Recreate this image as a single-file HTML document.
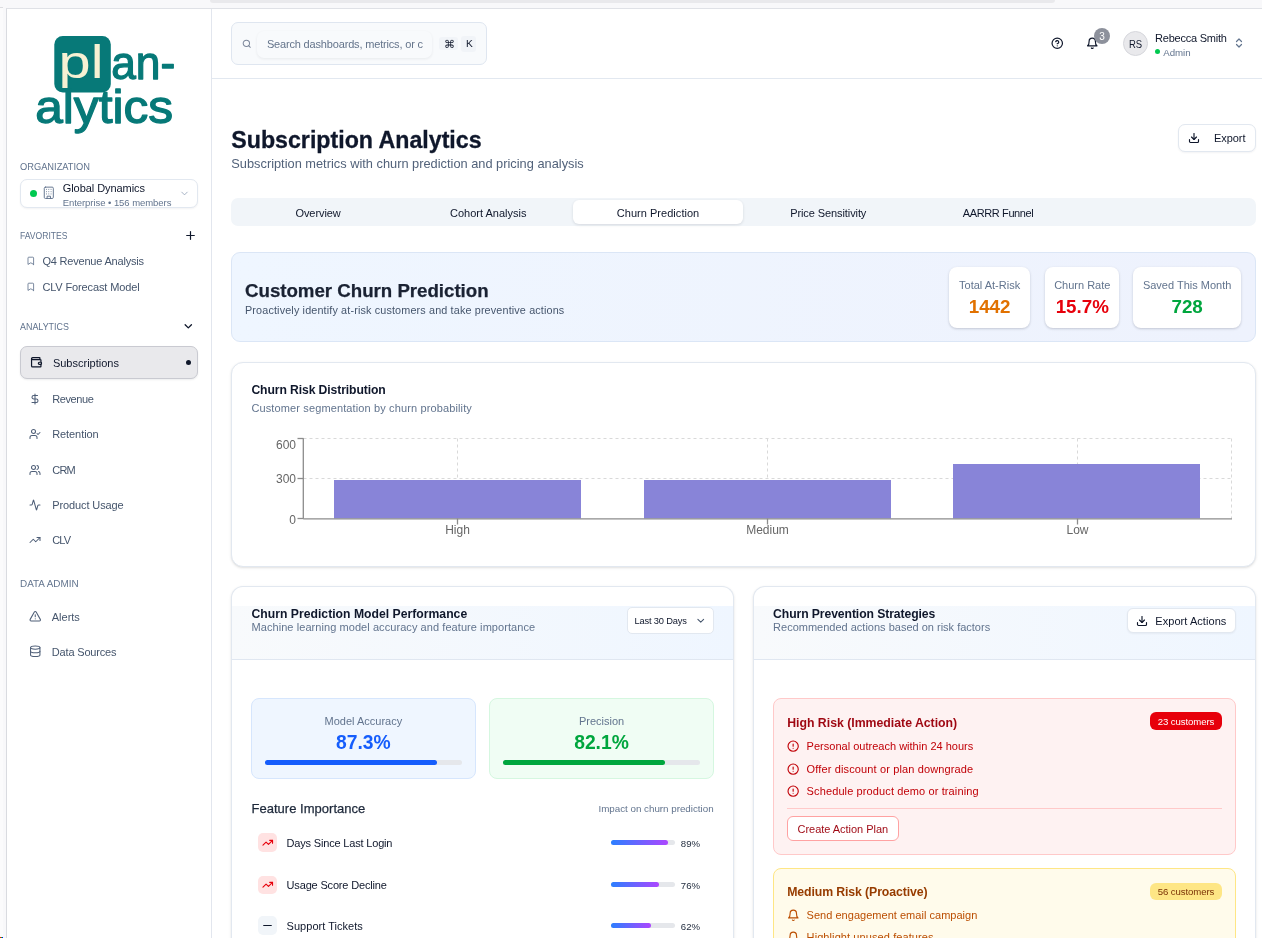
<!DOCTYPE html>
<html lang="en">
<head>
<meta charset="utf-8">
<title>Subscription Analytics - Plan-alytics</title>
<style>
html,body{margin:0;padding:0}
body{width:1262px;height:938px;overflow:hidden;position:relative;background:#f8f8fa;font-family:"Liberation Sans", sans-serif;}
#app div,#app span,#app svg{position:absolute;box-sizing:border-box}
#app span{white-space:nowrap;display:block}
#app{position:absolute;left:0;top:0;width:1262px;height:938px;will-change:transform}
#app svg{overflow:visible}
#app svg text{font-family:"Liberation Sans", sans-serif}
</style>
</head>
<body>
<div id="app">
<div style="left:0px;top:0px;width:1262px;height:938px;background:#f8f8fa"></div>
<div style="left:210px;top:0px;width:845px;height:3px;background:#e9e9ec;border-radius:0 0 6px 6px"></div>
<div style="left:0px;top:7px;width:3px;height:1px;background:#dcdce0"></div>
<div style="left:0px;top:8px;width:3px;height:930px;background:#fbfbfc"></div>
<div style="left:0px;top:937px;width:1px;height:1px;background:#ff0000"></div>
<div style="left:1px;top:937px;width:1px;height:1px;background:#00d000"></div>
<div style="left:2px;top:937px;width:1px;height:1px;background:#0000ff"></div>
<div style="left:6px;top:8px;width:1256px;height:930px;background:#fff;border-top:1px solid #dfe1e6;border-left:1px solid #d9dbe0"></div>
<div style="left:212px;top:79px;width:1050px;height:859px;background:#ffffff"></div>
<div style="left:211px;top:9px;width:1px;height:929px;background:#e2e6ee"></div>
<div style="left:212px;top:78px;width:1050px;height:1px;background:#e2e8f0"></div>
<svg style="left:30px;top:30px" width="160" height="112" viewBox="30 30 160 112">
<rect x="54.3" y="35.9" width="56.5" height="56.7" rx="8.5" fill="#077978"/>
<text x="58.6" y="78" font-size="47" fill="#f6f1d3" textLength="45" lengthAdjust="spacingAndGlyphs">pl</text>
<g fill="#077978" stroke="#077978" stroke-width="1.3" stroke-linejoin="round">
<text x="111.2" y="78.5" font-size="47" textLength="64" lengthAdjust="spacingAndGlyphs">an-</text>
<text x="35.2" y="123" font-size="47" textLength="138" lengthAdjust="spacingAndGlyphs">alytics</text>
</g>
</svg>
<span style="left:20.00px;top:160.50px;font-size:10.1px;line-height:14px;color:#62748e;transform:scaleX(0.9201);transform-origin:left center;text-rendering:geometricPrecision;">ORGANIZATION</span>
<div style="left:20px;top:179px;width:178px;height:29px;background:#fff;border:1px solid #e2e8f0;border-radius:7px;box-shadow:0 1px 2px rgba(15,23,42,.05)"></div>
<div style="left:29.7px;top:189.5px;width:7.400000000000002px;height:7.400000000000006px;background:#00c950;border-radius:50%"></div>
<svg style="left:42.20px;top:186.40px" width="13.6" height="13.6" viewBox="0 0 24 24" fill="none" stroke="#62748e" stroke-width="1.7" stroke-linecap="round" stroke-linejoin="round"><rect width="16" height="20" x="4" y="2" rx="2" ry="2"/><path d="M9 22v-4h6v4"/><path d="M8 6h.01"/><path d="M16 6h.01"/><path d="M12 6h.01"/><path d="M12 10h.01"/><path d="M12 14h.01"/><path d="M16 10h.01"/><path d="M16 14h.01"/><path d="M8 10h.01"/><path d="M8 14h.01"/></svg>
<span style="left:62.70px;top:181.00px;font-size:11px;line-height:15px;color:#0f172b;letter-spacing:-0.056px;">Global Dynamics</span>
<span style="left:62.70px;top:196.20px;font-size:9.5px;line-height:13px;color:#62748e;letter-spacing:-0.054px;">Enterprise • 156 members</span>
<svg style="left:179.20px;top:187.80px" width="11" height="11" viewBox="0 0 24 24" fill="none" stroke="#94a3b8" stroke-width="1.8" stroke-linecap="round" stroke-linejoin="round"><path d="m6 9 6 6 6-6"/></svg>
<span style="left:20.00px;top:229.60px;font-size:10.1px;line-height:14px;color:#62748e;transform:scaleX(0.8496);transform-origin:left center;text-rendering:geometricPrecision;">FAVORITES</span>
<svg style="left:184.00px;top:228.70px" width="13" height="13" viewBox="0 0 24 24" fill="none" stroke="#0f172b" stroke-width="2.2" stroke-linecap="round" stroke-linejoin="round"><path d="M5 12h14"/><path d="M12 5v14"/></svg>
<svg style="left:25.90px;top:256.30px" width="9.6" height="9.6" viewBox="0 0 24 24" fill="none" stroke="#62748e" stroke-width="2.1" stroke-linecap="round" stroke-linejoin="round"><path d="m19 21-7-4-7 4V5a2 2 0 0 1 2-2h10a2 2 0 0 1 2 2v16z"/></svg>
<span style="left:42.40px;top:253.50px;font-size:11px;line-height:15px;color:#45556c;letter-spacing:-0.193px;">Q4 Revenue Analysis</span>
<svg style="left:25.90px;top:282.30px" width="9.6" height="9.6" viewBox="0 0 24 24" fill="none" stroke="#62748e" stroke-width="2.1" stroke-linecap="round" stroke-linejoin="round"><path d="m19 21-7-4-7 4V5a2 2 0 0 1 2-2h10a2 2 0 0 1 2 2v16z"/></svg>
<span style="left:42.40px;top:279.50px;font-size:11px;line-height:15px;color:#45556c;letter-spacing:-0.131px;">CLV Forecast Model</span>
<span style="left:20.00px;top:321.40px;font-size:10.1px;line-height:14px;color:#62748e;transform:scaleX(0.8836);transform-origin:left center;text-rendering:geometricPrecision;">ANALYTICS</span>
<svg style="left:182.20px;top:320.00px" width="12.6" height="12.6" viewBox="0 0 24 24" fill="none" stroke="#0f172b" stroke-width="2.5" stroke-linecap="round" stroke-linejoin="round"><path d="m6 9 6 6 6-6"/></svg>
<div style="left:20px;top:346px;width:178px;height:33px;background:#e9e9ec;border:1px solid #c9cad1;border-radius:7px;box-shadow:0 1px 2px rgba(15,23,42,.08)"></div>
<svg style="left:30.15px;top:356.05px" width="12.5" height="12.5" viewBox="0 0 24 24" fill="none" stroke="#0f172b" stroke-width="2.3" stroke-linecap="round" stroke-linejoin="round"><path d="M19 7V4a1 1 0 0 0-1-1H5a2 2 0 0 0 0 4h15a1 1 0 0 1 1 1v4h-3a2 2 0 0 0 0 4h3a1 1 0 0 0 1-1v-2a1 1 0 0 0-1-1"/><path d="M3 5v14a2 2 0 0 0 2 2h15a1 1 0 0 0 1-1v-4"/></svg>
<span style="left:52.90px;top:356.20px;font-size:11px;line-height:15px;color:#0f172b;">Subscriptions</span>
<div style="left:185.6px;top:360.3px;width:5.0px;height:5.0px;background:#0f172a;border-radius:50%"></div>
<svg style="left:28.80px;top:392.70px" width="12" height="12" viewBox="0 0 24 24" fill="none" stroke="#4e5e77" stroke-width="2.1" stroke-linecap="round" stroke-linejoin="round"><line x1="12" x2="12" y1="2" y2="22"/><path d="M17 5H9.5a3.5 3.5 0 0 0 0 7h5a3.5 3.5 0 0 1 0 7H6"/></svg>
<span style="left:52.20px;top:392.10px;font-size:11px;line-height:15px;color:#45556c;letter-spacing:-0.392px;">Revenue</span>
<svg style="left:28.80px;top:427.80px" width="12" height="12" viewBox="0 0 24 24" fill="none" stroke="#4e5e77" stroke-width="2.1" stroke-linecap="round" stroke-linejoin="round"><path d="M16 21v-2a4 4 0 0 0-4-4H6a4 4 0 0 0-4 4v2"/><circle cx="9" cy="7" r="4"/><polyline points="16 11 18 13 22 9"/></svg>
<span style="left:52.20px;top:427.20px;font-size:11px;line-height:15px;color:#45556c;letter-spacing:-0.077px;">Retention</span>
<svg style="left:28.80px;top:464.10px" width="12" height="12" viewBox="0 0 24 24" fill="none" stroke="#4e5e77" stroke-width="2.1" stroke-linecap="round" stroke-linejoin="round"><path d="M16 21v-2a4 4 0 0 0-4-4H6a4 4 0 0 0-4 4v2"/><circle cx="9" cy="7" r="4"/><path d="M22 21v-2a4 4 0 0 0-3-3.87"/><path d="M16 3.13a4 4 0 0 1 0 7.75"/></svg>
<span style="left:52.20px;top:462.80px;font-size:11px;line-height:15px;color:#45556c;letter-spacing:-0.754px;">CRM</span>
<svg style="left:28.80px;top:498.90px" width="12" height="12" viewBox="0 0 24 24" fill="none" stroke="#4e5e77" stroke-width="2.1" stroke-linecap="round" stroke-linejoin="round"><path d="M22 12h-2.48a2 2 0 0 0-1.93 1.46l-2.35 8.36a.25.25 0 0 1-.48 0L9.24 2.18a.25.25 0 0 0-.48 0l-2.35 8.36A2 2 0 0 1 4.49 12H2"/></svg>
<span style="left:52.20px;top:498.30px;font-size:11px;line-height:15px;color:#45556c;letter-spacing:-0.105px;">Product Usage</span>
<svg style="left:28.80px;top:533.70px" width="12" height="12" viewBox="0 0 24 24" fill="none" stroke="#4e5e77" stroke-width="2.1" stroke-linecap="round" stroke-linejoin="round"><polyline points="22 7 13.5 15.5 8.5 10.5 2 17"/><polyline points="16 7 22 7 22 13"/></svg>
<span style="left:52.20px;top:532.90px;font-size:11px;line-height:15px;color:#45556c;letter-spacing:-0.850px;">CLV</span>
<span style="left:20.00px;top:578.40px;font-size:10.1px;line-height:14px;color:#62748e;transform:scaleX(0.9826);transform-origin:left center;text-rendering:geometricPrecision;">DATA ADMIN</span>
<svg style="left:28.95px;top:610.35px" width="12.5" height="12.5" viewBox="0 0 24 24" fill="none" stroke="#4e5e77" stroke-width="2.0" stroke-linecap="round" stroke-linejoin="round"><path d="m21.73 18-8-14a2 2 0 0 0-3.48 0l-8 14A2 2 0 0 0 4 21h16a2 2 0 0 0 1.73-3"/><path d="M12 9v4"/><path d="M12 17h.01"/></svg>
<span style="left:51.80px;top:610.00px;font-size:11px;line-height:15px;color:#45556c;letter-spacing:-0.021px;">Alerts</span>
<svg style="left:28.95px;top:645.35px" width="12.5" height="12.5" viewBox="0 0 24 24" fill="none" stroke="#4e5e77" stroke-width="2.0" stroke-linecap="round" stroke-linejoin="round"><ellipse cx="12" cy="5" rx="9" ry="3"/><path d="M3 5V19A9 3 0 0 0 21 19V5"/><path d="M3 12A9 3 0 0 0 21 12"/></svg>
<span style="left:51.80px;top:644.60px;font-size:11px;line-height:15px;color:#45556c;letter-spacing:-0.171px;">Data Sources</span>
<div style="left:231px;top:22px;width:256px;height:43px;background:#f8fafc;border:1px solid #dfe6f0;border-radius:7px"></div>
<svg style="left:241.85px;top:38.85px" width="9.5" height="9.5" viewBox="0 0 24 24" fill="none" stroke="#7c879b" stroke-width="2.6" stroke-linecap="round" stroke-linejoin="round"><circle cx="11" cy="11" r="8"/><path d="m21 21-4.3-4.3"/></svg>
<div style="left:256.5px;top:31px;width:175.8px;height:27px;background:#f8fafc;border-radius:7px;box-shadow:0 1px 3px rgba(15,23,42,.07)"></div>
<span style="left:266.90px;top:37.00px;font-size:11px;line-height:15px;color:#64748b;letter-spacing:-0.169px;">Search dashboards, metrics, or c</span>
<div style="left:439px;top:37.2px;width:19px;height:13.0px;background:#f1f4f8;border-radius:3px"></div>
<span style="left:443.55px;top:37.00px;font-size:10.5px;line-height:15px;color:#0f172b;font-family:"DejaVu Sans", sans-serif;text-rendering:geometricPrecision;">⌘</span>
<div style="left:461px;top:36.4px;width:15.199999999999989px;height:15.200000000000003px;background:#f1f4f8;border-radius:3px"></div>
<span style="left:465.90px;top:38.40px;font-size:10.2px;line-height:14px;color:#0f172b;text-rendering:geometricPrecision;">K</span>
<svg style="left:1051.05px;top:37.35px" width="12.5" height="12.5" viewBox="0 0 24 24" fill="none" stroke="#0f172b" stroke-width="2.3" stroke-linecap="round" stroke-linejoin="round"><circle cx="12" cy="12" r="10"/><path d="M9.09 9a3 3 0 0 1 5.83 1c0 2-3 3-3 3"/><path d="M12 17h.01"/></svg>
<svg style="left:1086.15px;top:37.15px" width="12.5" height="12.5" viewBox="0 0 24 24" fill="none" stroke="#0f172b" stroke-width="2.3" stroke-linecap="round" stroke-linejoin="round"><path d="M6 8a6 6 0 0 1 12 0c0 7 3 9 3 9H3s3-2 3-9"/><path d="M10.3 21a1.94 1.94 0 0 0 3.4 0"/></svg>
<div style="left:1094px;top:28px;width:16px;height:16px;background:#8d919c;border-radius:50%"></div>
<span style="left:1099.22px;top:30.40px;font-size:10px;line-height:14px;color:#fff;">3</span>
<div style="left:1123px;top:31px;width:25px;height:25px;background:#e9e9ec;border:1px solid #d6d7dc;border-radius:50%"></div>
<span style="left:1129.00px;top:36.00px;font-size:11.2px;line-height:16px;color:#0f172b;transform:scaleX(0.8490);transform-origin:left center;">RS</span>
<span style="left:1155.10px;top:30.80px;font-size:11px;line-height:15px;color:#0f172b;letter-spacing:-0.230px;">Rebecca Smith</span>
<div style="left:1155px;top:49px;width:5px;height:5px;background:#00c950;border-radius:50%"></div>
<span style="left:1163.20px;top:46.10px;font-size:9.7px;line-height:14px;color:#62748e;letter-spacing:-0.014px;">Admin</span>
<svg style="left:1233.40px;top:37.30px" width="12" height="12" viewBox="0 0 24 24" fill="none" stroke="#62748e" stroke-width="2.4" stroke-linecap="round" stroke-linejoin="round"><path d="m7 15 5 5 5-5"/><path d="m7 9 5-5 5 5"/></svg>
<span style="left:231.30px;top:124.50px;font-size:23.2px;line-height:30px;color:#0f172b;font-weight:700;letter-spacing:-0.004px;-webkit-text-stroke:0.3px #0f172b;">Subscription Analytics</span>
<span style="left:231.30px;top:155.40px;font-size:12.8px;line-height:18px;color:#52627a;letter-spacing:0.005px;">Subscription metrics with churn prediction and pricing analysis</span>
<div style="left:1177.5px;top:124px;width:78.0px;height:28.400000000000006px;background:#fff;border:1px solid #e2e8f0;border-radius:7px;box-shadow:0 1px 2px rgba(15,23,42,.05)"></div>
<svg style="left:1188.40px;top:132.30px" width="12" height="12" viewBox="0 0 24 24" fill="none" stroke="#0f172b" stroke-width="2.3" stroke-linecap="round" stroke-linejoin="round"><path d="M21 15v4a2 2 0 0 1-2 2H5a2 2 0 0 1-2-2v-4"/><polyline points="7 10 12 15 17 10"/><line x1="12" x2="12" y1="15" y2="3"/></svg>
<span style="left:1213.90px;top:131.30px;font-size:11px;line-height:15px;color:#0f172b;letter-spacing:-0.033px;">Export</span>
<div style="left:231px;top:198px;width:1024.5px;height:28px;background:#f1f5f9;border-radius:7px"></div>
<div style="left:573px;top:200px;width:170px;height:24px;background:#fff;border-radius:6px;box-shadow:0 1px 3px rgba(15,23,42,.12)"></div>
<span style="left:295.42px;top:205.90px;font-size:11px;line-height:15px;color:#0f172b;letter-spacing:-0.068px;">Overview</span>
<span style="left:449.95px;top:205.90px;font-size:11px;line-height:15px;color:#0f172b;letter-spacing:0.004px;">Cohort Analysis</span>
<span style="left:616.77px;top:205.90px;font-size:11px;line-height:15px;color:#0f172b;letter-spacing:0.035px;">Churn Prediction</span>
<span style="left:790.20px;top:205.90px;font-size:11px;line-height:15px;color:#0f172b;letter-spacing:-0.091px;">Price Sensitivity</span>
<span style="left:962.81px;top:205.90px;font-size:11px;line-height:15px;color:#0f172b;letter-spacing:-0.384px;">AARRR Funnel</span>
<div style="left:231px;top:252px;width:1024.5px;height:90px;background:linear-gradient(90deg,#eff6ff 0%,#eef2fd 100%);border:1px solid #dbe6f6;border-radius:9px"></div>
<span style="left:245.00px;top:278.20px;font-size:18.7px;line-height:26px;color:#1a2233;font-weight:700;letter-spacing:-0.016px;-webkit-text-stroke:0.25px #1a2233;">Customer Churn Prediction</span>
<span style="left:245.00px;top:302.90px;font-size:10.8px;line-height:15px;color:#45556c;letter-spacing:0.148px;">Proactively identify at-risk customers and take preventive actions</span>
<div style="left:949px;top:266.8px;width:81.20000000000005px;height:61.599999999999966px;background:#fff;border-radius:8px;box-shadow:0 1px 3px rgba(15,23,42,.14),0 1px 2px rgba(15,23,42,.06)"></div>
<span style="left:959.03px;top:277.70px;font-size:11px;line-height:15px;color:#62748e;">Total At-Risk</span>
<span style="left:968.71px;top:295.20px;font-size:18.8px;line-height:24px;color:#e17100;font-weight:700;">1442</span>
<div style="left:1045.2px;top:266.8px;width:74.20000000000005px;height:61.599999999999966px;background:#fff;border-radius:8px;box-shadow:0 1px 3px rgba(15,23,42,.14),0 1px 2px rgba(15,23,42,.06)"></div>
<span style="left:1054.17px;top:277.70px;font-size:11px;line-height:15px;color:#62748e;">Churn Rate</span>
<span style="left:1055.67px;top:295.20px;font-size:18.8px;line-height:24px;color:#e7000b;font-weight:700;">15.7%</span>
<div style="left:1132.8px;top:266.8px;width:108.70000000000005px;height:61.599999999999966px;background:#fff;border-radius:8px;box-shadow:0 1px 3px rgba(15,23,42,.14),0 1px 2px rgba(15,23,42,.06)"></div>
<span style="left:1142.92px;top:277.70px;font-size:11px;line-height:15px;color:#62748e;">Saved This Month</span>
<span style="left:1171.48px;top:295.20px;font-size:18.8px;line-height:24px;color:#00a63e;font-weight:700;">728</span>
<div style="left:231px;top:362px;width:1024.5px;height:205px;background:#fff;border:1px solid #e2e8f0;border-radius:12px;box-shadow:0 1px 3px rgba(0,0,0,.1),0 1px 2px -1px rgba(0,0,0,.1)"></div>
<span style="left:251.40px;top:382.00px;font-size:12.2px;line-height:17px;color:#0f172b;font-weight:700;letter-spacing:-0.108px;">Churn Risk Distribution</span>
<span style="left:251.40px;top:400.70px;font-size:11px;line-height:15px;color:#62748e;letter-spacing:0.128px;">Customer segmentation by churn probability</span>
<svg style="left:260px;top:430px" width="990" height="115" viewBox="260 430 990 115">
<g stroke="#d9d9d9" stroke-dasharray="3 3" fill="none" stroke-width="1">
<line x1="303.5" y1="438.5" x2="1232" y2="438.5"/><line x1="303.5" y1="478.5" x2="1232" y2="478.5"/>
<line x1="457.5" y1="438.5" x2="457.5" y2="518.5"/><line x1="767.5" y1="438.5" x2="767.5" y2="518.5"/><line x1="1077.5" y1="438.5" x2="1077.5" y2="518.5"/>
<line x1="1231.5" y1="438.5" x2="1231.5" y2="518.5"/>
</g>
<g fill="#8884d8">
<rect x="334" y="480" width="247" height="38.5"/><rect x="644" y="480" width="247" height="38.5"/><rect x="953" y="464" width="247" height="54.5"/>
</g>
<g stroke="#8c8c8c" stroke-width="1.3" fill="none">
<line x1="303.3" y1="438.3" x2="303.3" y2="518.8"/><line x1="303.3" y1="518.8" x2="1232" y2="518.8"/>
<line x1="297.5" y1="438.5" x2="303.5" y2="438.5"/><line x1="297.5" y1="478.5" x2="303.5" y2="478.5"/><line x1="297.5" y1="518.5" x2="303.5" y2="518.5"/>
<line x1="457.5" y1="518.5" x2="457.5" y2="524.5"/><line x1="767.5" y1="518.5" x2="767.5" y2="524.5"/><line x1="1077.5" y1="518.5" x2="1077.5" y2="524.5"/>
</g>
<g fill="#666" font-size="12">
<text x="296" y="449" text-anchor="end">600</text><text x="296" y="483.2" text-anchor="end">300</text><text x="296" y="524" text-anchor="end">0</text>
<text x="457.5" y="534" text-anchor="middle">High</text><text x="767.5" y="534" text-anchor="middle">Medium</text><text x="1077.5" y="534" text-anchor="middle">Low</text>
</g>
</svg>
<div style="left:231px;top:586px;width:502.5px;height:359px;background:#fff;border:1px solid #e2e8f0;border-bottom:none;border-radius:12px 12px 0 0;box-shadow:0 1px 3px rgba(0,0,0,.1),0 1px 2px -1px rgba(0,0,0,.1)"></div>
<div style="left:232px;top:606px;width:500.5px;height:53.5px;background:linear-gradient(90deg,#f8fafc,#eff6ff);border-bottom:1px solid #e0e7f1"></div>
<span style="left:251.50px;top:605.60px;font-size:12.2px;line-height:17px;color:#0f172b;font-weight:700;letter-spacing:0.010px;">Churn Prediction Model Performance</span>
<span style="left:251.50px;top:620.20px;font-size:11px;line-height:15px;color:#62748e;letter-spacing:0.068px;">Machine learning model accuracy and feature importance</span>
<div style="left:627.3px;top:607.3px;width:86.40000000000009px;height:26.300000000000068px;background:#fff;border:1px solid #e2e8f0;border-radius:5px"></div>
<span style="left:634.50px;top:615.10px;font-size:9.3px;line-height:13px;color:#0f172b;letter-spacing:-0.172px;">Last 30 Days</span>
<svg style="left:695.05px;top:615.45px" width="11.5" height="11.5" viewBox="0 0 24 24" fill="none" stroke="#45556c" stroke-width="2.2" stroke-linecap="round" stroke-linejoin="round"><path d="m6 9 6 6 6-6"/></svg>
<div style="left:251px;top:698px;width:224.7px;height:80.79999999999995px;background:#eff6ff;border:1px solid #d6e6fd;border-radius:8px"></div>
<span style="left:324.57px;top:713.50px;font-size:11px;line-height:15px;color:#62748e;">Model Accuracy</span>
<span style="left:336.06px;top:731.20px;font-size:19.3px;line-height:24px;color:#155dfc;font-weight:700;">87.3%</span>
<div style="left:265.2px;top:760px;width:196.8px;height:5.2000000000000455px;background:#e5e7eb;border-radius:3px"></div>
<div style="left:265.2px;top:760px;width:171.8px;height:5.2000000000000455px;background:#155dfc;border-radius:3px"></div>
<div style="left:489.4px;top:698px;width:224.20000000000005px;height:80.79999999999995px;background:#f0fdf4;border:1px solid #d5f7e0;border-radius:8px"></div>
<span style="left:578.88px;top:713.50px;font-size:11px;line-height:15px;color:#62748e;">Precision</span>
<span style="left:574.16px;top:731.20px;font-size:19.3px;line-height:24px;color:#00a63e;font-weight:700;">82.1%</span>
<div style="left:503.1px;top:760px;width:196.89999999999998px;height:5.2000000000000455px;background:#e5e7eb;border-radius:3px"></div>
<div style="left:503.1px;top:760px;width:161.60000000000002px;height:5.2000000000000455px;background:#00a63e;border-radius:3px"></div>
<span style="left:251.50px;top:800.10px;font-size:13px;line-height:18px;color:#1e293b;letter-spacing:0.019px;-webkit-text-stroke:0.25px #1e293b;">Feature Importance</span>
<span style="left:598.49px;top:802.00px;font-size:9.8px;line-height:14px;color:#62748e;letter-spacing:-0.014px;">Impact on churn prediction</span>
<div style="left:258.4px;top:833.4px;width:18.400000000000034px;height:18.40000000000009px;background:#ffe2e2;border-radius:5px"></div>
<svg style="left:261.85px;top:836.85px" width="11.5" height="11.5" viewBox="0 0 24 24" fill="none" stroke="#e7000b" stroke-width="2.3" stroke-linecap="round" stroke-linejoin="round"><polyline points="22 7 13.5 15.5 8.5 10.5 2 17"/><polyline points="16 7 22 7 22 13"/></svg>
<span style="left:286.60px;top:835.80px;font-size:11px;line-height:15px;color:#0f172b;letter-spacing:-0.179px;">Days Since Last Login</span>
<div style="left:611px;top:840.0px;width:63.799999999999955px;height:5.2000000000000455px;background:#e5e7eb;border-radius:3px"></div>
<div style="left:611px;top:840.0px;width:56.78200000000004px;height:5.2000000000000455px;background:linear-gradient(90deg,#2b7fff,#ad46ff);border-radius:3px"></div>
<span style="left:680.80px;top:836.60px;font-size:9.6px;line-height:13px;color:#1e293b;">89%</span>
<div style="left:258.4px;top:875.6999999999999px;width:18.400000000000034px;height:18.40000000000009px;background:#ffe2e2;border-radius:5px"></div>
<svg style="left:261.85px;top:879.15px" width="11.5" height="11.5" viewBox="0 0 24 24" fill="none" stroke="#e7000b" stroke-width="2.3" stroke-linecap="round" stroke-linejoin="round"><polyline points="22 7 13.5 15.5 8.5 10.5 2 17"/><polyline points="16 7 22 7 22 13"/></svg>
<span style="left:286.60px;top:878.10px;font-size:11px;line-height:15px;color:#0f172b;letter-spacing:-0.171px;">Usage Score Decline</span>
<div style="left:611px;top:882.3px;width:63.799999999999955px;height:5.2000000000000455px;background:#e5e7eb;border-radius:3px"></div>
<div style="left:611px;top:882.3px;width:48.488000000000056px;height:5.2000000000000455px;background:linear-gradient(90deg,#2b7fff,#ad46ff);border-radius:3px"></div>
<span style="left:680.80px;top:878.90px;font-size:9.6px;line-height:13px;color:#1e293b;">76%</span>
<div style="left:258.4px;top:916.3px;width:18.400000000000034px;height:18.40000000000009px;background:#f1f5f9;border-radius:5px"></div>
<svg style="left:261.10px;top:919.00px" width="13" height="13" viewBox="0 0 24 24" fill="none" stroke="#0f172b" stroke-width="2.1" stroke-linecap="round" stroke-linejoin="round"><path d="M5 12h14"/></svg>
<span style="left:286.60px;top:918.70px;font-size:11px;line-height:15px;color:#0f172b;letter-spacing:0.025px;">Support Tickets</span>
<div style="left:611px;top:922.9px;width:63.799999999999955px;height:5.2000000000000455px;background:#e5e7eb;border-radius:3px"></div>
<div style="left:611px;top:922.9px;width:39.55600000000004px;height:5.2000000000000455px;background:linear-gradient(90deg,#2b7fff,#ad46ff);border-radius:3px"></div>
<span style="left:680.80px;top:919.50px;font-size:9.6px;line-height:13px;color:#1e293b;">62%</span>
<div style="left:753px;top:586px;width:502.5px;height:359px;background:#fff;border:1px solid #e2e8f0;border-bottom:none;border-radius:12px 12px 0 0;box-shadow:0 1px 3px rgba(0,0,0,.1),0 1px 2px -1px rgba(0,0,0,.1)"></div>
<div style="left:754px;top:606px;width:500.5px;height:53.5px;background:linear-gradient(90deg,#f8fafc,#eff6ff);border-bottom:1px solid #e0e7f1"></div>
<span style="left:773.10px;top:605.60px;font-size:12.2px;line-height:17px;color:#0f172b;font-weight:700;letter-spacing:-0.092px;">Churn Prevention Strategies</span>
<span style="left:773.10px;top:619.60px;font-size:11px;line-height:15px;color:#62748e;">Recommended actions based on risk factors</span>
<div style="left:1127px;top:608.3px;width:108.70000000000005px;height:24.5px;background:#fff;border:1px solid #e2e8f0;border-radius:6px;box-shadow:0 1px 2px rgba(15,23,42,.05)"></div>
<svg style="left:1136.00px;top:614.60px" width="12" height="12" viewBox="0 0 24 24" fill="none" stroke="#0f172b" stroke-width="2.3" stroke-linecap="round" stroke-linejoin="round"><path d="M21 15v4a2 2 0 0 1-2 2H5a2 2 0 0 1-2-2v-4"/><polyline points="7 10 12 15 17 10"/><line x1="12" x2="12" y1="15" y2="3"/></svg>
<span style="left:1155.30px;top:613.50px;font-size:11px;line-height:15px;color:#0f172b;letter-spacing:0.055px;">Export Actions</span>
<div style="left:773px;top:698.2px;width:462.5px;height:156.79999999999995px;background:#fef2f2;border:1px solid #ffc9c9;border-radius:8px"></div>
<span style="left:787.20px;top:714.80px;font-size:12.3px;line-height:17px;color:#9f0712;font-weight:700;letter-spacing:-0.013px;">High Risk (Immediate Action)</span>
<div style="left:1150px;top:712.3px;width:72.29999999999995px;height:17.40000000000009px;background:#e7000b;border-radius:6px"></div>
<span style="left:1157.80px;top:714.70px;font-size:9.6px;line-height:13px;color:#fff;letter-spacing:-0.091px;">23 customers</span>
<svg style="left:786.85px;top:739.75px" width="12.3" height="12.3" viewBox="0 0 24 24" fill="none" stroke="#c10007" stroke-width="2.2" stroke-linecap="round" stroke-linejoin="round"><circle cx="12" cy="12" r="10"/><line x1="12" x2="12" y1="8" y2="12"/><line x1="12" x2="12.01" y1="16" y2="16"/></svg>
<span style="left:806.60px;top:738.70px;font-size:11px;line-height:15px;color:#c10007;letter-spacing:0.011px;">Personal outreach within 24 hours</span>
<svg style="left:786.85px;top:762.55px" width="12.3" height="12.3" viewBox="0 0 24 24" fill="none" stroke="#c10007" stroke-width="2.2" stroke-linecap="round" stroke-linejoin="round"><circle cx="12" cy="12" r="10"/><line x1="12" x2="12" y1="8" y2="12"/><line x1="12" x2="12.01" y1="16" y2="16"/></svg>
<span style="left:806.60px;top:761.50px;font-size:11px;line-height:15px;color:#c10007;letter-spacing:0.132px;">Offer discount or plan downgrade</span>
<svg style="left:786.85px;top:784.85px" width="12.3" height="12.3" viewBox="0 0 24 24" fill="none" stroke="#c10007" stroke-width="2.2" stroke-linecap="round" stroke-linejoin="round"><circle cx="12" cy="12" r="10"/><line x1="12" x2="12" y1="8" y2="12"/><line x1="12" x2="12.01" y1="16" y2="16"/></svg>
<span style="left:806.60px;top:783.80px;font-size:11px;line-height:15px;color:#c10007;letter-spacing:0.119px;">Schedule product demo or training</span>
<div style="left:787.2px;top:808.3px;width:435.0999999999999px;height:1.0px;background:#ffc9c9"></div>
<div style="left:787.2px;top:816.1px;width:111.69999999999993px;height:24.899999999999977px;background:#fff;border:1px solid #ffa2a2;border-radius:6px"></div>
<span style="left:797.50px;top:821.50px;font-size:11px;line-height:15px;color:#9f0712;letter-spacing:-0.029px;">Create Action Plan</span>
<div style="left:773px;top:868.2px;width:462.5px;height:131.79999999999995px;background:#fffbeb;border:1px solid #fee685;border-radius:8px"></div>
<span style="left:787.20px;top:884.30px;font-size:12.3px;line-height:17px;color:#973c00;font-weight:700;letter-spacing:-0.114px;">Medium Risk (Proactive)</span>
<div style="left:1150px;top:882.7px;width:72.29999999999995px;height:17.299999999999955px;background:#fee685;border-radius:6px"></div>
<span style="left:1157.80px;top:885.10px;font-size:9.6px;line-height:13px;color:#7b3306;letter-spacing:-0.091px;">56 customers</span>
<svg style="left:786.70px;top:909.30px" width="12.6" height="12.6" viewBox="0 0 24 24" fill="none" stroke="#bb4d00" stroke-width="2.2" stroke-linecap="round" stroke-linejoin="round"><path d="M6 8a6 6 0 0 1 12 0c0 7 3 9 3 9H3s3-2 3-9"/><path d="M10.3 21a1.94 1.94 0 0 0 3.4 0"/></svg>
<span style="left:806.60px;top:908.30px;font-size:11px;line-height:15px;color:#bb4d00;letter-spacing:0.026px;">Send engagement email campaign</span>
<svg style="left:786.70px;top:930.80px" width="12.6" height="12.6" viewBox="0 0 24 24" fill="none" stroke="#bb4d00" stroke-width="2.2" stroke-linecap="round" stroke-linejoin="round"><path d="M6 8a6 6 0 0 1 12 0c0 7 3 9 3 9H3s3-2 3-9"/><path d="M10.3 21a1.94 1.94 0 0 0 3.4 0"/></svg>
<span style="left:806.60px;top:929.80px;font-size:11px;line-height:15px;color:#bb4d00;letter-spacing:0.090px;">Highlight unused features</span>
</div>
</body>
</html>
